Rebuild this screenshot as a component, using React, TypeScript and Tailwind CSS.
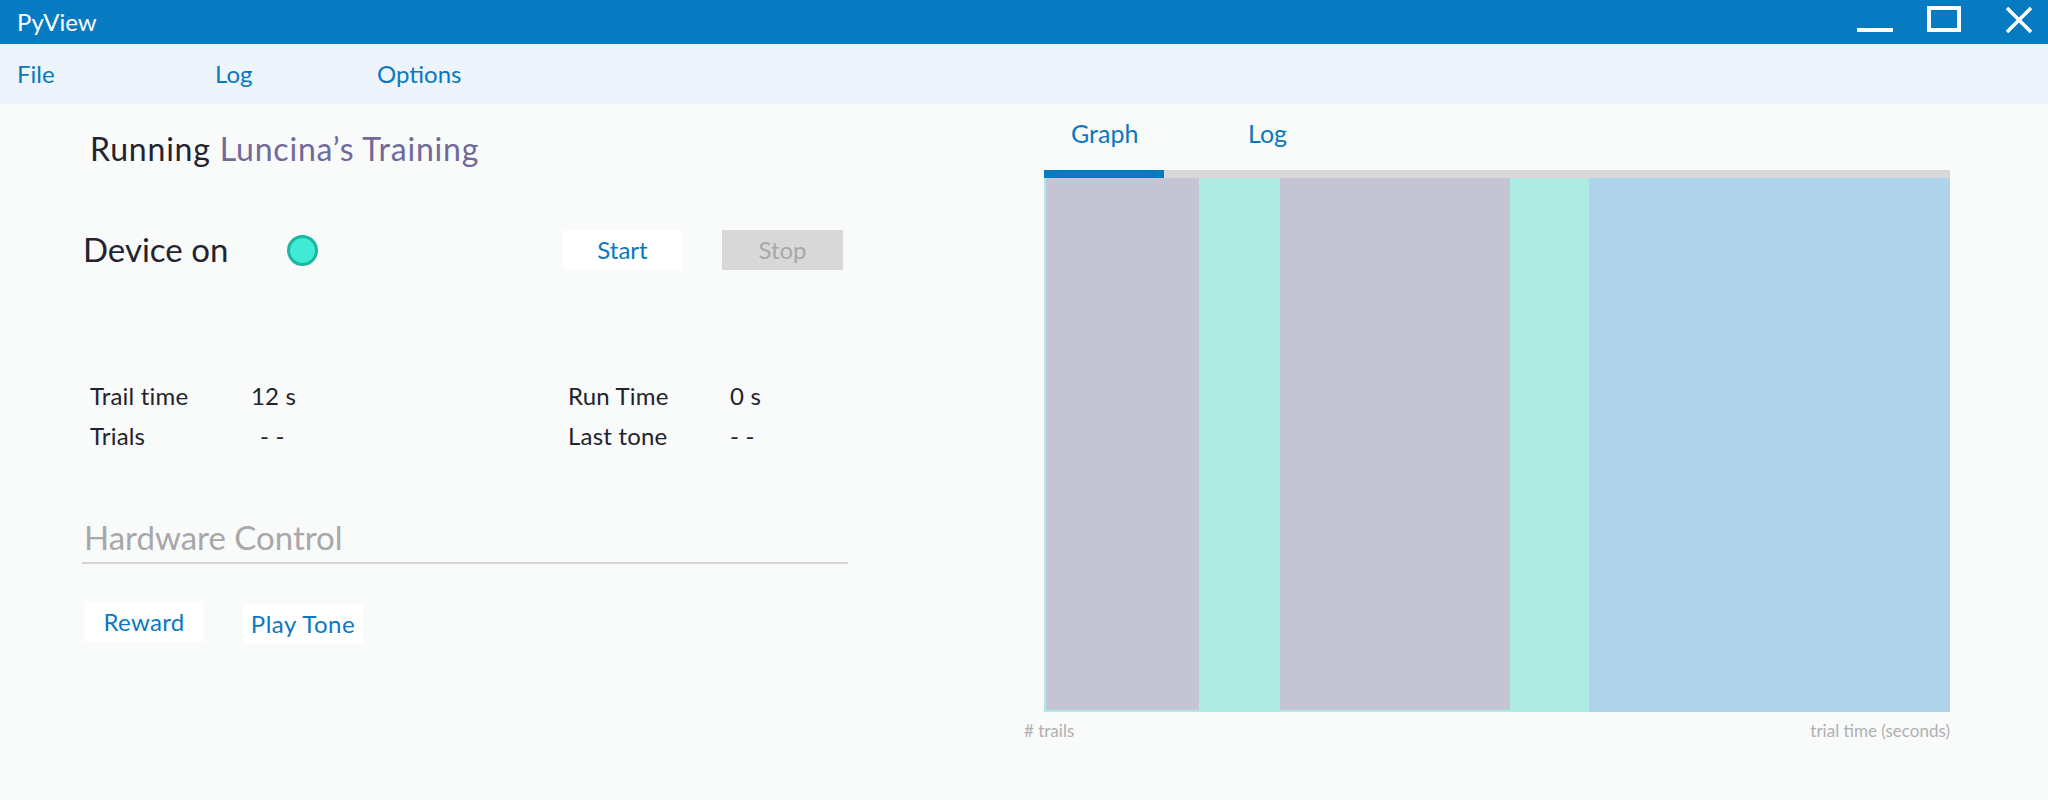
import { useState } from "react";

const stats = [
  { label: "Trail time", value: "12 s", label2: "Run Time", value2: "0 s" },
  { label: "Trials", value: "- -", label2: "Last tone", value2: "- -" },
];

function WindowControls() {
  return (
    <div className="flex items-center h-full">
      <svg width="36" height="44" viewBox="0 0 36 44" className="ml-0">
        <rect x="0" y="28" width="36" height="4" fill="#fff" />
      </svg>
      <svg width="34" height="44" viewBox="0 0 34 44" className="ml-[34px]">
        <rect x="2" y="8" width="30" height="22" fill="none" stroke="#fff" strokeWidth="4" />
      </svg>
      <svg width="26" height="44" viewBox="0 0 26 44" className="ml-[45px] mr-[16px]">
        <path d="M1 8 L25 32 M25 8 L1 32" stroke="#fff" strokeWidth="3.5" />
      </svg>
    </div>
  );
}

export default function App() {
  const [tab, setTab] = useState("graph");

  return (
    <div
      className="w-full h-[800px] flex flex-col bg-[#f9fafa] overflow-hidden"
      style={{ fontFamily: "Lato, 'Noto Sans', sans-serif" }}
    >
      <header className="h-[44px] bg-[#077bc1] flex items-center justify-between shrink-0">
        <div className="pl-[17px] text-[24px] text-white leading-none">PyView</div>
        <WindowControls />
      </header>

      <nav className="h-[60px] bg-[#edf4fb] flex items-center pl-[17px] text-[24px] text-[#0a78c1] shrink-0">
        <span className="w-[198px]">File</span>
        <span className="w-[162px]">Log</span>
        <span>Options</span>
      </nav>

      <div className="flex flex-1">
        <section className="w-[848px] pl-[82px] pt-[26px]">
          <h1 className="pl-[8px] text-[32px] leading-[38px] tracking-[0.8px] text-[#22232e]">
            Running <span className="text-[#6f6a9a]">Luncina’s Training</span>
          </h1>

          <div className="mt-[62px] flex items-center h-[40px]">
            <span className="pl-px w-[205px] text-[33px] text-[#22232e]">Device on</span>
            <span className="w-[31px] h-[31px] rounded-full bg-[#41ead4] border-[3px] border-[#1db69e]" />
            <button className="ml-[245px] w-[119px] h-[40px] bg-white text-[24px] text-[#0a78c1]">Start</button>
            <button className="ml-[40px] w-[121px] h-[40px] bg-[#d8d8d8] text-[24px] text-[#a8a8a8]">Stop</button>
          </div>

          <div className="mt-[111px] pl-[8px] text-[24px] tracking-[0.2px] text-[#22232e]">
            {stats.map((s, i) => (
              <div key={s.label} className="flex items-center h-[30px] mb-[10px]">
                <span className="w-[161px]">{s.label}</span>
                <span className={i === 1 ? "w-[317px] pl-[9px]" : "w-[317px]"}>{s.value}</span>
                <span className="w-[162px]">{s.label2}</span>
                <span>{s.value2}</span>
              </div>
            ))}
          </div>

          <div className="mt-[67px] pl-[2px] pb-[6px] border-b-2 border-[#d6d6d6] text-[33px] leading-[38px] text-[#a8a8a8]">
            Hardware Control
          </div>

          <div className="mt-[37px] pl-[2px] flex items-start gap-[39px]">
            <button className="w-[120px] h-[41px] bg-white text-[24px] tracking-[0.3px] text-[#0a78c1]">Reward</button>
            <button className="mt-[3px] w-[120px] h-[40px] bg-white text-[24px] tracking-[0.5px] text-[#0a78c1]">Play Tone</button>
          </div>
        </section>

        <section className="ml-[196px] w-[906px] pt-[15px]">
          <div className="flex h-[30px] items-center text-[25px] text-[#0a78c1]">
            <button onClick={() => setTab("graph")} className="ml-[27px] w-[177px] text-left">Graph</button>
            <button onClick={() => setTab("log")} className="text-left">Log</button>
          </div>

          <div className="mt-[21px] h-[8px] bg-[#d8d8d8] flex">
            <div className={tab === "graph" ? "w-[120px] bg-[#077bc1]" : "w-[120px]"} />
            <div className={tab === "log" ? "ml-[57px] w-[120px] bg-[#077bc1]" : "ml-[57px] w-[120px]"} />
          </div>

          <div className="h-[534px] bg-[#aeebe2] flex">
            <div className="ml-[2px] w-[153px] mb-[2px] bg-[#c5c4d4]" />
            <div className="w-[81px]" />
            <div className="w-[230px] mb-[2px] bg-[#c5c4d4]" />
            <div className="w-[79px]" />
            <div className="flex-1 bg-[#aed3ea]" />
          </div>

          <div className="mt-[8px] -ml-[20px] w-[926px] flex justify-between text-[17px] leading-[22px] text-[#b0b0b0]">
            <span># trails</span>
            <span>trial time (seconds)</span>
          </div>
        </section>
      </div>
    </div>
  );
}
